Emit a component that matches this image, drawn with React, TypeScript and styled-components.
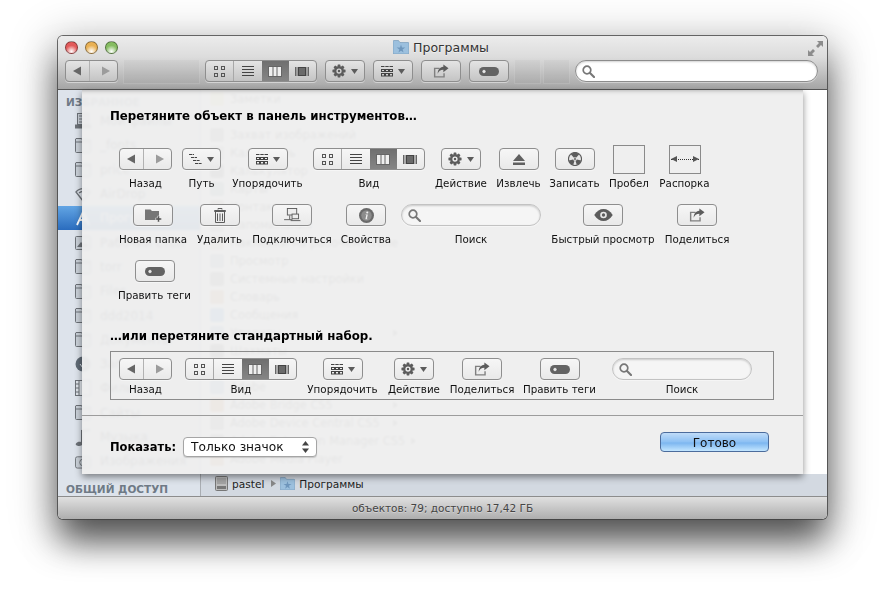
import { ReactNode } from 'react';
import styled, { createGlobalStyle } from 'styled-components';

const GlobalStyle = createGlobalStyle`
    html, body {
        margin: 0;
        background: #fff;
        overflow: hidden;
    }
    * {
        box-sizing: border-box;
    }
    body {
        font-family: "DejaVu Sans", "Liberation Sans", sans-serif;
    }
`;

const DARK = '#5c5c5c';

const gearPath = (() => {
    const pts: string[] = [];
    const teeth = 8;
    for (let i = 0; i < teeth; i++) {
        const a = (i / teeth) * Math.PI * 2;
        const step = (Math.PI * 2) / teeth;
        [
            [5.2, -0.5],
            [7.6, -0.22],
            [7.6, 0.22],
            [5.2, 0.5],
        ].forEach(([r, o]) => {
            const t = a + o * step;
            pts.push(`${(8 + r * Math.cos(t)).toFixed(2)} ${(8 + r * Math.sin(t)).toFixed(2)}`);
        });
    }
    return `M${pts.join('L')}Z M8 5a3 3 0 1 0 0 6a3 3 0 1 0 0-6Z`;
})();

const BackIcon = () => (
    <svg width="8" height="10" viewBox="0 0 9 10">
        <path d="M0 5L9 0V10Z" fill="#666" />
    </svg>
);
const ForwardIcon = () => (
    <svg width="8" height="10" viewBox="0 0 9 10">
        <path d="M9 5L0 0V10Z" fill="#9c9c9c" />
    </svg>
);
const IconsViewIcon = () => (
    <svg width="11" height="11" viewBox="0 0 11 11" fill="none" stroke="#555">
        <rect x="0.5" y="0.5" width="3" height="3" />
        <rect x="7.5" y="0.5" width="3" height="3" />
        <rect x="0.5" y="7.5" width="3" height="3" />
        <rect x="7.5" y="7.5" width="3" height="3" />
    </svg>
);
const ListViewIcon = () => (
    <svg width="12" height="11" viewBox="0 0 12 11" stroke="#444">
        <path d="M0 .5H12M0 3.5H12M0 6.5H12M0 9.5H12" />
    </svg>
);
const ColumnsViewIcon = () => (
    <svg width="14" height="11" viewBox="0 0 14 11" fill="#efefef" stroke="#666">
        <rect x="0.5" y="0.5" width="13" height="10" />
        <path d="M5 .5V10.5M9 .5V10.5" fill="none" />
    </svg>
);
const CoverViewIcon = () => (
    <svg width="14" height="11" viewBox="0 0 14 11">
        <rect x="3.5" y="1.5" width="7" height="8" fill="#6a6a6a" stroke="#444" />
        <path d="M.5 1V10M2 1V10M12 1V10M13.5 1V10" stroke="#666" />
    </svg>
);
const GearIcon = () => (
    <svg width="14" height="14" viewBox="0 0 16 16">
        <path d={gearPath} fill={DARK} fillRule="evenodd" />
        <circle cx="8" cy="8" r="1.4" fill={DARK} />
    </svg>
);
const Caret = () => (
    <svg width="7" height="5" viewBox="0 0 7 5">
        <path d="M0 0H7L3.5 5Z" fill={DARK} />
    </svg>
);
const ArrangeIcon = () => (
    <svg width="12" height="11" viewBox="0 0 12 11" fill="none" stroke="#444">
        <path d="M0 .5H3.5M4.3 .5H7.7M8.5 .5H12" />
        <rect x="0.5" y="3.5" width="3" height="2" />
        <rect x="4.5" y="3.5" width="3" height="2" />
        <rect x="8.5" y="3.5" width="3" height="2" />
        <rect x="0.5" y="7.5" width="3" height="2.5" />
        <rect x="4.5" y="7.5" width="3" height="2.5" />
        <rect x="8.5" y="7.5" width="3" height="2.5" />
    </svg>
);
const PathIcon = () => (
    <svg width="13" height="10" viewBox="0 0 13 10" stroke="#444">
        <path d="M0 .5H5M2 3.5H8M4 6.5H11M6 9.5H13" strokeWidth="1" strokeDasharray="3 .6" />
    </svg>
);
const ShareIcon = () => (
    <svg width="16" height="14" viewBox="0 0 17 14">
        <path d="M1 3.5H7V5H2.5V12.5H11V9.5H12.5V14H1Z" fill="#808080" />
        <path d="M11 0L16.5 4L11 8.2V5.6C8 5.6 6 7 5 10C5 6 7 3 11 2.6Z" fill="#5c5c5c" />
    </svg>
);
const TagIcon = () => (
    <svg width="20" height="9" viewBox="0 0 20 9">
        <rect width="20" height="9" rx="4.5" fill="#636363" />
        <circle cx="5" cy="4.5" r="2" fill="#e8e8e8" stroke="#3f3f3f" strokeWidth="0.5" />
    </svg>
);
const EjectIcon = () => (
    <svg width="12" height="11" viewBox="0 0 12 11" fill="#606060">
        <path d="M6 0L12 7H0Z" />
        <rect y="8.5" width="12" height="2.5" />
    </svg>
);
const BurnIcon = () => (
    <svg width="14" height="14" viewBox="0 0 15 15">
        <circle cx="7.5" cy="7.5" r="7" fill="#e6e6e6" stroke="#5c5c5c" strokeWidth="1.2" />
        <path
            d="M7.5 7.5L3 2.4A6.6 6.6 0 0 1 12 2.4ZM7.5 7.5L14 9A6.6 6.6 0 0 1 9.4 14ZM7.5 7.5L5.6 14A6.6 6.6 0 0 1 1 9Z"
            fill="#5c5c5c"
        />
        <circle cx="7.5" cy="7.5" r="2" fill="#e6e6e6" />
        <circle cx="7.5" cy="7.5" r="1" fill="#5c5c5c" />
    </svg>
);
const NewFolderIcon = () => (
    <svg width="17" height="14" viewBox="0 0 17 14">
        <path d="M0 1.5H5.5L7 3H14V12H0Z" fill="#767676" />
        <path d="M12.5 8H14.5V10H16.5V12H14.5V14H12.5V12H10.5V10H12.5Z" fill="#555" stroke="#eee" strokeWidth="0.5" />
    </svg>
);
const TrashIcon = () => (
    <svg width="12" height="15" viewBox="0 0 12 15" fill="none" stroke="#5c5c5c">
        <path d="M4 1.5V.5H8V1.5M.5 2.5H11.5V3.5H.5Z" />
        <path d="M1.5 4V14.5H10.5V4" />
        <path d="M3.5 5.5V13M6 5.5V13M8.5 5.5V13" />
    </svg>
);
const ConnectIcon = () => (
    <svg width="17" height="14" viewBox="0 0 18 15" fill="#ededed" stroke="#5c5c5c">
        <rect x="3.5" y="0.5" width="10" height="7" />
        <path d="M0 12.5H9M6 8V12.5" fill="none" />
        <rect x="8.5" y="6.5" width="7" height="5" />
        <path d="M7 13.5H17.5" fill="none" />
    </svg>
);
const InfoIcon = () => (
    <svg width="15" height="15" viewBox="0 0 16 16">
        <circle cx="8" cy="8" r="8" fill="#6a6a6a" />
        <circle cx="8" cy="8" r="5.6" fill="#8c8c8c" />
        <circle cx="8.8" cy="4.7" r="1.1" fill="#f1f1f1" />
        <path d="M7 7H9.4L8.4 11.5H9.2V12H6.8L7.8 7.5H7Z" fill="#f1f1f1" />
    </svg>
);
const EyeIcon = () => (
    <svg width="19" height="12" viewBox="0 0 20 13">
        <path d="M0 6.5C3 2 6 0 10 0S17 2 20 6.5C17 11 14 13 10 13S3 11 0 6.5Z" fill="#5c5c5c" />
        <circle cx="10" cy="6.5" r="3.6" fill="#e8e8e8" />
        <circle cx="10" cy="6.5" r="1.8" fill="#5c5c5c" />
    </svg>
);
const SearchIcon = () => (
    <svg width="13" height="13" viewBox="0 0 13 13" fill="none" stroke="#777">
        <circle cx="5" cy="5" r="3.8" strokeWidth="1.7" />
        <path d="M8 8L12 12" strokeWidth="2.2" strokeLinecap="round" />
    </svg>
);
const BlueFolder = ({ size }: { size: number }) => (
    <svg width={size} height={size - 2} viewBox="0 0 16 14">
        <path d="M0 1.5C0 .7.6.5 1 .5H5.5L7 2.5H15C15.6 2.5 16 2.9 16 3.5V13C16 13.6 15.6 14 15 14H1C.4 14 0 13.6 0 13Z" fill="#9cc0de" stroke="#6f93b3" strokeWidth="0.6" />
        <path d="M8 4.5L9 7.6H12.3L9.6 9.5L10.6 12.6L8 10.7L5.4 12.6L6.4 9.5L3.7 7.6H7Z" fill="#6f97bd" />
    </svg>
);
const DiskIcon = () => (
    <svg width="13" height="15" viewBox="0 0 13 15">
        <rect x="0.5" y="0.5" width="12" height="14" rx="1" fill="#bdbdbd" stroke="#777" />
        <path d="M2 3H11M2 5H11M2 7H11" stroke="#8a8a8a" />
        <rect x="2" y="10" width="9" height="3" fill="#777" />
    </svg>
);
const ExpandIcon = () => (
    <svg width="15" height="15" viewBox="0 0 15 15" fill="#8c8c8c">
        <path d="M9 0H15V6L13 4L10 7L8 5L11 2Z" />
        <path d="M0 15V9L2 11L5 8L7 10L4 13L6 15Z" />
    </svg>
);
const PathArrow = () => (
    <svg width="5" height="7" viewBox="0 0 5 7">
        <path d="M0 0L5 3.5L0 7Z" fill="#888" />
    </svg>
);
const UpDown = () => (
    <svg width="7" height="12" viewBox="0 0 7 12" fill="#444">
        <path d="M3.5 0L7 4.5H0Z" />
        <path d="M3.5 12L7 7.5H0Z" />
    </svg>
);
const SideIcon = ({ kind, white }: { kind: string; white?: boolean }) => {
    const c = white ? '#fff' : '#6d7278';
    if (kind === 'round') {
        return (
            <svg width="16" height="16" viewBox="0 0 16 16">
                <circle cx="8" cy="8" r="7.5" fill="#5f6a75" />
                <path d="M8 3V11M5 8L8 12L11 8" stroke="#dde3eb" fill="none" />
            </svg>
        );
    }
    if (kind === 'wifi') {
        return (
            <svg width="16" height="16" viewBox="0 0 16 16" fill="none" stroke={c} strokeWidth="1.4">
                <path d="M1 6A9 9 0 0 1 15 6L8 15Z M4 7A6 6 0 0 1 12 7" />
            </svg>
        );
    }
    if (kind === 'app') {
        return (
            <svg width="16" height="16" viewBox="0 0 16 16" fill="none" stroke={c} strokeWidth="1.8">
                <path d="M2 15L8 2M8 2L14 15M4 10H12" />
            </svg>
        );
    }
    if (kind === 'note') {
        return (
            <svg width="16" height="18" viewBox="0 0 16 18" fill={c}>
                <path d="M6 14V2L15 1V3L8 4V15C8 17 6 18 4 18S0 17 1 15.5 4 13.5 6 14Z" />
            </svg>
        );
    }
    if (kind === 'film') {
        return (
            <svg width="16" height="16" viewBox="0 0 16 16" fill="#dfe4ea" stroke={c}>
                <rect x="0.5" y="0.5" width="15" height="15" />
                <path d="M4 .5V15.5M.5 4H4M.5 8H4M.5 12H4" fill="none" />
            </svg>
        );
    }
    if (kind === 'desk') {
        return (
            <svg width="16" height="16" viewBox="0 0 16 16" fill="#c9d0d8" stroke={c}>
                <rect x="0.5" y="1.5" width="15" height="13" rx="1" />
                <path d="M2 12L6 7L9 10L11 8L14 12Z" fill={c} stroke="none" />
            </svg>
        );
    }
    if (kind === 'hd') {
        return (
            <svg width="16" height="16" viewBox="0 0 16 16" fill="#c9d0d8" stroke={c}>
                <rect x="2.5" y="0.5" width="11" height="11" />
                <path d="M4 3H12M4 6H12M4 9H12" fill="none" />
                <rect x="0.5" y="12" width="15" height="3" fill={c} />
            </svg>
        );
    }
    if (kind === 'camera') {
        return (
            <svg width="17" height="15" viewBox="0 0 17 15" fill="#c9d0d8" stroke={c}>
                <rect x="0.5" y="2.5" width="16" height="12" rx="2" />
                <circle cx="8.5" cy="8.5" r="3.5" />
            </svg>
        );
    }
    return (
        <svg width="16" height="15" viewBox="0 0 16 15" fill="#c9d0d8" stroke={c}>
            <path d="M1 .5H6.5L7.5 2H15.5V13.5Q15.5 14.5 14.5 14.5H1.5Q.5 14.5 .5 13.5V1Z" />
            <path d="M.5 4H15.5" fill="none" />
        </svg>
    );
};

const SIDEBAR_ROWS = [
    ['Мои файлы', 'hd'],
    ['_fonts', 'folder'],
    ['price', 'folder'],
    ['AirDrop', 'wifi'],
    ['Программы', 'app'],
    ['Рабочий стол', 'desk'],
    ['torr', 'folder'],
    ['Files', 'folder'],
    ['ddd2014', 'folder'],
    ['Документы', 'folder'],
    ['Загрузки', 'round'],
    ['Фильмы', 'film'],
    ['Сайты', 'folder'],
    ['Музыка', 'note'],
    ['Изображения', 'camera'],
];

const FILE_ROWS: [string, string, boolean?][] = [
    ['Заметки', '#e9dc9a'],
    ['', 'transparent'],
    ['Захват изображений', '#9a9a9a'],
    ['Календарь', '#b8b8b8'],
    ['Калькулятор', '#777'],
    ['Карты', '#8aa'],
    ['Контакты', '#a98'],
    ['Напоминания', '#bbb'],
    ['Наклейки на рабочем столе', '#cb9'],
    ['Просмотр', '#9ab'],
    ['Системные настройки', '#888'],
    ['Словарь', '#c96'],
    ['Сообщения', '#59d'],
    ['Утилиты', '#8ac', true],
    ['Шахматы', '#777'],
    ['', 'transparent'],
    ['Adobe', '#8ac'],
    ['Adobe Bridge CS5', '#c84', true],
    ['Adobe Device Central CS5', '#999', true],
    ['Adobe Extension Manager CS5', '#999', true],
    ['Adobe Media Player', '#c96'],
];

const ViewSegments = ({ $bar }: { $bar?: boolean }) => (
    <Segments $bar={$bar}>
        <Segment $divided>
            <IconsViewIcon />
        </Segment>
        <Segment>
            <ListViewIcon />
        </Segment>
        <Segment $active>
            <ColumnsViewIcon />
        </Segment>
        <Segment>
            <CoverViewIcon />
        </Segment>
    </Segments>
);

const NavButtons = ({ $bar }: { $bar?: boolean }) => (
    <ToolButton $w={53} $bar={$bar}>
        <NavHalf $divided>
            <BackIcon />
        </NavHalf>
        <NavHalf>
            <ForwardIcon />
        </NavHalf>
    </ToolButton>
);

const Field = ({ $bar }: { $bar?: boolean }) => (
    <SearchField $bar={$bar}>
        <SearchIcon />
    </SearchField>
);

type ItemProps = { label: string; w: number; tight?: boolean; ml?: number; children: ReactNode };

function PaletteItem({ label, w, tight, ml, children }: ItemProps) {
    return (
        <Item $w={w} $ml={ml}>
            <ItemSlot>{children}</ItemSlot>
            <ItemLabel $tight={tight}>{label}</ItemLabel>
        </Item>
    );
}

function App(): JSX.Element {
    return (
        <Stage>
            <GlobalStyle />
            <Window>
                <TitleBar>
                    <TitleRow>
                        <Lights>
                            <Light $color="#e25a5a" />
                            <Light $color="#e9b155" />
                            <Light $color="#86bd62" />
                        </Lights>
                        <WindowTitle>
                            <BlueFolder size={16} />
                            Программы
                        </WindowTitle>
                        <ExpandSlot>
                            <ExpandIcon />
                        </ExpandSlot>
                    </TitleRow>
                    <Toolbar>
                        <NavButtons $bar />
                        <Placeholder $w={77} />
                        <ViewSegments $bar />
                        <ToolButton $bar>
                            <GearIcon />
                            <Caret />
                        </ToolButton>
                        <ToolButton $bar>
                            <ArrangeIcon />
                            <Caret />
                        </ToolButton>
                        <ToolButton $bar>
                            <ShareIcon />
                        </ToolButton>
                        <ToolButton $bar>
                            <TagIcon />
                        </ToolButton>
                        <Placeholder $w={27} />
                        <Placeholder $w={27} />
                        <Field $bar />
                    </Toolbar>
                </TitleBar>

                <Body>
                    <Sidebar>
                        <SideHeading>ИЗБРАННОЕ</SideHeading>
                        {SIDEBAR_ROWS.map(([name, kind]) => (
                            <SideRow key={name} $selected={name === 'Программы'}>
                                <SideIconSlot>
                                    <SideIcon kind={kind} white={name === 'Программы'} />
                                </SideIconSlot>
                                {name}
                            </SideRow>
                        ))}
                        <SideHeading $last>ОБЩИЙ ДОСТУП</SideHeading>
                    </Sidebar>
                    <Main>
                        <FileList>
                            {FILE_ROWS.map(([name, color, folder], i) => (
                                <FileRow key={i}>
                                    <FileSwatch $color={color} />
                                    <FileName>{name}</FileName>
                                    {folder && <FileArrow />}
                                </FileRow>
                            ))}
                        </FileList>
                        <PathBar>
                            <DiskIcon />
                            <PathText>pastel</PathText>
                            <PathArrow />
                            <BlueFolder size={15} />
                            <PathText>Программы</PathText>
                        </PathBar>
                    </Main>
                </Body>

                <StatusBar>объектов: 79; доступно 17,42 ГБ</StatusBar>

                <Sheet>
                    <SheetHeading>Перетяните объект в панель инструментов…</SheetHeading>
                    <Palette>
                        <PaletteRow>
                            <PaletteItem label="Назад" w={53}>
                                <NavButtons />
                            </PaletteItem>
                            <PaletteItem label="Путь" w={39}>
                                <ToolButton $w={39}>
                                    <PathIcon />
                                    <Caret />
                                </ToolButton>
                            </PaletteItem>
                            <PaletteItem label="Упорядочить" w={71} ml={1}>
                                <ToolButton>
                                    <ArrangeIcon />
                                    <Caret />
                                </ToolButton>
                            </PaletteItem>
                            <PaletteItem label="Вид" w={112}>
                                <ViewSegments />
                            </PaletteItem>
                            <PaletteItem label="Действие" w={52}>
                                <ToolButton>
                                    <GearIcon />
                                    <Caret />
                                </ToolButton>
                            </PaletteItem>
                            <PaletteItem label="Извлечь" w={43}>
                                <ToolButton>
                                    <EjectIcon />
                                </ToolButton>
                            </PaletteItem>
                            <PaletteItem label="Записать" w={49}>
                                <ToolButton>
                                    <BurnIcon />
                                </ToolButton>
                            </PaletteItem>
                            <PaletteItem label="Пробел" w={40}>
                                <SpaceBox />
                            </PaletteItem>
                            <PaletteItem label="Распорка" w={51}>
                                <SpaceBox>
                                    <SpringLine />
                                </SpaceBox>
                            </PaletteItem>
                        </PaletteRow>
                        <PaletteRow>
                            <PaletteItem label="Новая папка" w={68}>
                                <ToolButton>
                                    <NewFolderIcon />
                                </ToolButton>
                            </PaletteItem>
                            <PaletteItem label="Удалить" w={45}>
                                <ToolButton>
                                    <TrashIcon />
                                </ToolButton>
                            </PaletteItem>
                            <PaletteItem label="Подключиться" w={78} ml={1}>
                                <ToolButton>
                                    <ConnectIcon />
                                </ToolButton>
                            </PaletteItem>
                            <PaletteItem label="Свойства" w={50}>
                                <ToolButton>
                                    <InfoIcon />
                                </ToolButton>
                            </PaletteItem>
                            <PaletteItem label="Поиск" w={140}>
                                <Field />
                            </PaletteItem>
                            <PaletteItem label="Быстрый просмотр" w={104}>
                                <ToolButton>
                                    <EyeIcon />
                                </ToolButton>
                            </PaletteItem>
                            <PaletteItem label="Поделиться" w={64}>
                                <ToolButton>
                                    <ShareIcon />
                                </ToolButton>
                            </PaletteItem>
                        </PaletteRow>
                        <PaletteRow>
                            <PaletteItem label="Править теги" w={71}>
                                <ToolButton>
                                    <TagIcon />
                                </ToolButton>
                            </PaletteItem>
                        </PaletteRow>
                    </Palette>

                    <SheetHeading $second>…или перетяните стандартный набор.</SheetHeading>
                    <DefaultSet>
                        <PaletteItem label="Назад" w={53} tight>
                            <NavButtons />
                        </PaletteItem>
                        <PaletteItem label="Вид" w={112} tight ml={3}>
                            <ViewSegments />
                        </PaletteItem>
                        <PaletteItem label="Упорядочить" w={71} tight>
                            <ToolButton>
                                <ArrangeIcon />
                                <Caret />
                            </ToolButton>
                        </PaletteItem>
                        <PaletteItem label="Действие" w={52} tight>
                            <ToolButton>
                                <GearIcon />
                                <Caret />
                            </ToolButton>
                        </PaletteItem>
                        <PaletteItem label="Поделиться" w={64} tight>
                            <ToolButton>
                                <ShareIcon />
                            </ToolButton>
                        </PaletteItem>
                        <PaletteItem label="Править теги" w={71} tight>
                            <ToolButton>
                                <TagIcon />
                            </ToolButton>
                        </PaletteItem>
                        <PaletteItem label="Поиск" w={140} tight ml={7}>
                            <Field />
                        </PaletteItem>
                    </DefaultSet>

                    <SheetFooter>
                        <ShowGroup>
                            <ShowLabel>Показать:</ShowLabel>
                            <SelectBox>
                                Только значок
                                <UpDown />
                            </SelectBox>
                        </ShowGroup>
                        <DoneButton>Готово</DoneButton>
                    </SheetFooter>
                </Sheet>
            </Window>
        </Stage>
    );
}
export default App;

const Stage = styled.div`
    width: 884px;
    height: 598px;
    padding: 36px 0 0 58px;
`;
const Window = styled.div`
    position: relative;
    width: 769px;
    height: 483px;
    display: flex;
    flex-direction: column;
    border-radius: 5px;
    background: #fff;
    box-shadow: 0 0 0 1px rgba(60, 60, 60, 0.75), 0 24px 34px -2px rgba(0, 0, 0, 0.6), 0 8px 44px 6px rgba(0, 0, 0, 0.25);
`;
const TitleBar = styled.div`
    height: 54px;
    flex: none;
    padding: 0 9px 0 7px;
    border-radius: 5px 5px 0 0;
    border-bottom: 1px solid #555;
    background: linear-gradient(#ececec, #dcdcdc 40%, #a5a5a5);
`;
const TitleRow = styled.div`
    height: 22px;
    display: flex;
    align-items: center;
`;
const Lights = styled.div`
    display: flex;
    gap: 7px;
    width: 84px;
`;
const Light = styled.span<{ $color: string }>`
    width: 13px;
    height: 13px;
    border-radius: 50%;
    border: 1px solid rgba(0, 0, 0, 0.4);
    background: radial-gradient(circle at 50% 85%, #fff 0, ${(p) => p.$color} 55%, ${(p) => p.$color} 100%);
`;
const WindowTitle = styled.div`
    flex: 1;
    display: flex;
    align-items: center;
    justify-content: center;
    gap: 4px;
    font-size: 12.5px;
    color: #333;
    text-shadow: 0 1px 0 rgba(255, 255, 255, 0.5);
`;
const ExpandSlot = styled.div`
    width: 90px;
    display: flex;
    justify-content: flex-end;
    margin: 2px -5px 0 0;
`;
const Toolbar = styled.div`
    display: flex;
    align-items: center;
    gap: 8px;
    height: 26px;
`;
const Placeholder = styled.div<{ $w: number }>`
    width: ${(p) => p.$w}px;
    height: 25px;
    margin: 0 -3px;
    border: 1px solid rgba(255, 255, 255, 0.14);
    background: rgba(120, 120, 120, 0.06);
`;
const ToolButton = styled.div<{ $w?: number; $bar?: boolean }>`
    width: ${(p) => p.$w ?? 40}px;
    height: 22px;
    flex: none;
    display: flex;
    align-items: center;
    justify-content: center;
    gap: 5px;
    border: 1px solid #8e8e8e;
    border-radius: 4px;
    background: ${(p) => (p.$bar ? 'linear-gradient(#e4e4e4, #c4c4c4)' : 'linear-gradient(#f6f6f6, #e9e9e9)')};
    box-shadow: 0 1px 0 rgba(255, 255, 255, 0.45);
`;
const NavHalf = styled.div<{ $divided?: boolean }>`
    flex: 1;
    height: 100%;
    display: flex;
    align-items: center;
    justify-content: center;
    border-right: ${(p) => (p.$divided ? '1px solid #b2b2b2' : 'none')};
`;
const Segments = styled.div<{ $bar?: boolean }>`
    width: 112px;
    height: 22px;
    flex: none;
    display: flex;
    border: 1px solid #8e8e8e;
    border-radius: 4px;
    overflow: hidden;
    background: ${(p) => (p.$bar ? 'linear-gradient(#e4e4e4, #c4c4c4)' : 'linear-gradient(#f6f6f6, #e9e9e9)')};
    box-shadow: 0 1px 0 rgba(255, 255, 255, 0.45);
`;
const Segment = styled.div<{ $active?: boolean; $divided?: boolean }>`
    flex: 1;
    display: flex;
    align-items: center;
    justify-content: center;
    border-right: ${(p) => (p.$divided ? '1px solid #a8a8a8' : 'none')};
    background: ${(p) => (p.$active ? 'linear-gradient(#6f6f6f, #858585)' : 'none')};
`;
const SearchField = styled.div<{ $bar?: boolean }>`
    flex: ${(p) => (p.$bar ? 1 : 'none')};
    width: ${(p) => (p.$bar ? 'auto' : '140px')};
    height: 22px;
    display: flex;
    align-items: center;
    padding-left: 6px;
    border-radius: 11px;
    border: 1px solid ${(p) => (p.$bar ? '#8c8c8c' : '#c2c2c2')};
    background: ${(p) => (p.$bar ? '#fff' : '#f5f5f5')};
    box-shadow: inset 0 1px 2px rgba(0, 0, 0, 0.18), 0 1px 0 rgba(255, 255, 255, 0.4);
`;
const Body = styled.div`
    flex: 1;
    min-height: 0;
    display: flex;
`;
const Sidebar = styled.div`
    width: 143px;
    flex: none;
    padding-top: 5px;
    overflow: hidden;
    background: #dde3eb;
    border-right: 1px solid #a9adb2;
`;
const SideHeading = styled.div<{ $last?: boolean }>`
    height: 14px;
    margin-top: ${(p) => (p.$last ? '9px' : 0)};
    padding-left: 8px;
    font-size: 10.5px;
    font-weight: bold;
    line-height: 14px;
    white-space: nowrap;
    color: #6f7a86;
`;
const SideRow = styled.div<{ $selected?: boolean }>`
    height: 24.3px;
    display: flex;
    align-items: center;
    padding-left: 17px;
    gap: 9px;
    font-size: 12px;
    white-space: nowrap;
    color: ${(p) => (p.$selected ? '#fff' : '#333')};
    background: ${(p) => (p.$selected ? 'linear-gradient(#62a5e4, #2a6cbe)' : 'none')};
`;
const SideIconSlot = styled.span`
    width: 16px;
    display: flex;
    justify-content: center;
`;
const Main = styled.div`
    flex: 1;
    min-width: 0;
    display: flex;
    flex-direction: column;
`;
const FileList = styled.div`
    flex: 1;
    min-height: 0;
    overflow: hidden;
    padding-left: 9px;
    background: #fff;
`;
const FileRow = styled.div`
    height: 18px;
    width: 188px;
    display: flex;
    align-items: center;
    gap: 6px;
    font-size: 11.4px;
    color: #333;
`;
const FileSwatch = styled.span<{ $color: string }>`
    width: 14px;
    height: 14px;
    flex: none;
    border-radius: 2px;
    background: ${(p) => p.$color};
`;
const FileName = styled.span`
    flex: 1;
    white-space: nowrap;
`;
const FileArrow = styled.span`
    width: 0;
    height: 0;
    border-left: 5px solid #777;
    border-top: 4px solid transparent;
    border-bottom: 4px solid transparent;
`;
const PathBar = styled.div`
    height: 22px;
    flex: none;
    display: flex;
    align-items: center;
    gap: 4px;
    padding: 0 0 3px 14px;
    background: #d3d9e1;
    font-size: 10.6px;
    color: #222;
`;
const PathText = styled.span`
    margin: 0 3px 0 0;
`;
const StatusBar = styled.div`
    height: 23px;
    flex: none;
    display: flex;
    align-items: center;
    justify-content: center;
    border-top: 1px solid #8d8d8d;
    border-radius: 0 0 5px 5px;
    background: linear-gradient(#e0e0e0, #aeaeae);
    font-size: 10.5px;
    color: #444;
    text-shadow: 0 1px 0 rgba(255, 255, 255, 0.35);
`;
const Sheet = styled.div`
    position: absolute;
    top: 54px;
    left: 24px;
    width: 721px;
    height: 384px;
    display: flex;
    flex-direction: column;
    background: rgba(238, 238, 238, 0.95);
    backdrop-filter: blur(1px);
    box-shadow: 0 3px 7px rgba(0, 0, 0, 0.45), inset 0 5px 5px -5px rgba(0, 0, 0, 0.35);
`;
const SheetHeading = styled.div<{ $second?: boolean }>`
    height: 16px;
    margin: ${(p) => (p.$second ? '26px' : '18px')} 0 0 28px;
    font-size: 11.8px;
    font-weight: bold;
    line-height: 16px;
    color: #000;
`;
const Palette = styled.div`
    display: flex;
    flex-direction: column;
    gap: 14px;
    margin-top: 24px;
    padding-left: 37px;
`;
const PaletteRow = styled.div`
    display: flex;
    gap: 10px;
`;
const Item = styled.div<{ $w: number; $ml?: number }>`
    width: ${(p) => p.$w}px;
    margin-left: ${(p) => p.$ml ?? 0}px;
    display: flex;
    flex-direction: column;
    align-items: center;
`;
const ItemSlot = styled.div`
    height: 22px;
    display: flex;
    align-items: center;
`;
const ItemLabel = styled.div<{ $tight?: boolean }>`
    margin-top: ${(p) => (p.$tight ? '3px' : '7px')};
    height: 13px;
    font-size: 10.3px;
    line-height: 13px;
    white-space: nowrap;
    color: #111;
`;
const SpaceBox = styled.div`
    width: 32px;
    height: 29px;
    display: flex;
    align-items: center;
    justify-content: center;
    border: 1px solid #8a8a8a;
`;
const SpringLine = styled.div`
    position: relative;
    width: 28px;
    border-top: 1px dotted #333;
    &::before,
    &::after {
        content: '';
        position: absolute;
        top: -4px;
        border-top: 3.5px solid transparent;
        border-bottom: 3.5px solid transparent;
    }
    &::before {
        left: 0;
        border-right: 6px solid #555;
    }
    &::after {
        right: 0;
        border-left: 6px solid #555;
    }
`;
const DefaultSet = styled.div`
    width: 664px;
    height: 49px;
    margin: 7px 0 0 28px;
    padding: 6px 0 0 8px;
    display: flex;
    gap: 10px;
    border: 1px solid #8a8a8a;
`;
const SheetFooter = styled.div`
    flex: 1;
    margin-top: 15px;
    display: flex;
    justify-content: space-between;
    align-items: flex-start;
    padding: 0 34px 0 28px;
    border-top: 1px solid #9c9c9c;
`;
const ShowGroup = styled.div`
    margin-top: 21px;
    display: flex;
    align-items: center;
    gap: 7px;
`;
const ShowLabel = styled.span`
    font-size: 11.5px;
    font-weight: bold;
    color: #000;
`;
const SelectBox = styled.div`
    width: 134px;
    height: 20px;
    display: flex;
    align-items: center;
    justify-content: space-between;
    padding: 0 7px;
    border: 1px solid #a5a5a5;
    border-radius: 4px;
    background: #fff;
    font-size: 12.2px;
    color: #111;
    box-shadow: 0 1px 1px rgba(0, 0, 0, 0.15);
`;
const DoneButton = styled.div`
    width: 109px;
    height: 20px;
    margin-top: 16px;
    padding-top: 1px;
    display: flex;
    align-items: center;
    justify-content: center;
    border: 1px solid #4c6c9c;
    border-radius: 4px;
    background: linear-gradient(#c0dcf8, #8cc0f4 50%, #7cb6f0 55%, #c3e6ff);
    font-size: 12px;
    color: #111;
`;
